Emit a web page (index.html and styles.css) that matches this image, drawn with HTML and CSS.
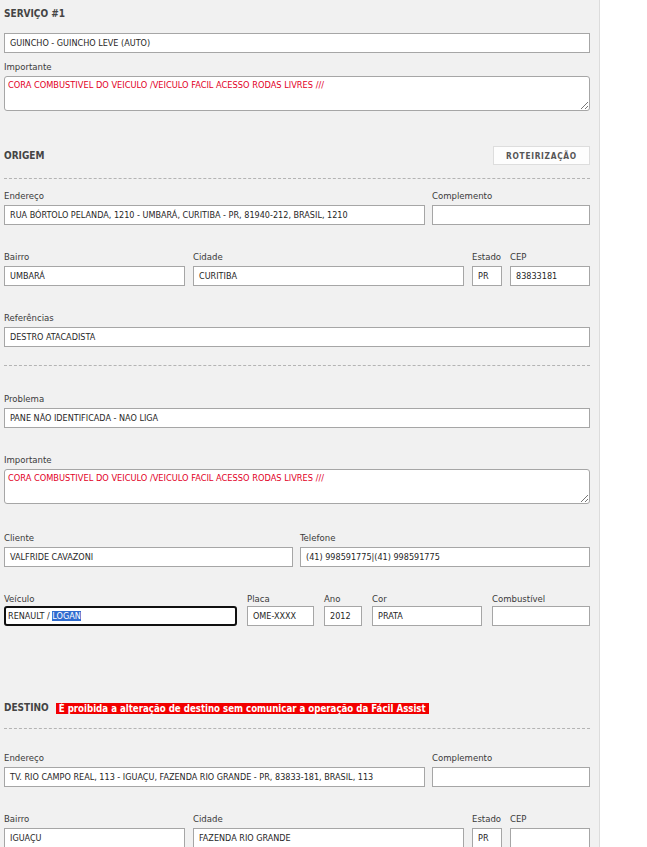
FILE: index.html
```html
<!DOCTYPE html>
<html lang="pt-BR">
<head>
<meta charset="utf-8">
<title>Serviço #1</title>
<link rel="stylesheet" href="styles.css">
</head>
<body>
<div class="panel">
  <div class="heading h-servico">SERVIÇO #1</div>
  <div class="field f-first">GUINCHO - GUINCHO LEVE (AUTO)</div>
  <div class="group g-imp1">
    <div class="label">Importante</div>
    <div class="area">CORA COMBUSTIVEL DO VEICULO /VEICULO FACIL ACESSO RODAS LIVRES ///<svg class="grip" width="8" height="8" viewBox="0 0 8 8"><path d="M1 8 L8 1 M5 8 L8 5" stroke="#777" stroke-width="1"/></svg></div>
  </div>

  <div class="section-head sh-origem">
    <span class="heading">ORIGEM</span>
    <span class="btn">ROTEIRIZAÇÃO</span>
  </div>
  <div class="dash d-origem"></div>

  <div class="row cols-end r-first">
    <div class="group"><div class="label">Endereço</div><div class="field">RUA BÓRTOLO PELANDA, 1210 - UMBARÁ, CURITIBA - PR, 81940-212, BRASIL, 1210</div></div>
    <div class="group"><div class="label">Complemento</div><div class="field"></div></div>
  </div>
  <div class="row cols-bairro r-next">
    <div class="group"><div class="label">Bairro</div><div class="field">UMBARÁ</div></div>
    <div class="group"><div class="label">Cidade</div><div class="field">CURITIBA</div></div>
    <div class="group"><div class="label">Estado</div><div class="field">PR</div></div>
    <div class="group"><div class="label">CEP</div><div class="field">83833181</div></div>
  </div>
  <div class="row r-next">
    <div class="group"><div class="label">Referências</div><div class="field">DESTRO ATACADISTA</div></div>
  </div>
  <div class="dash d-ref"></div>

  <div class="row r-problema">
    <div class="group"><div class="label">Problema</div><div class="field">PANE NÃO IDENTIFICADA - NAO LIGA</div></div>
  </div>
  <div class="row r-next">
    <div class="group"><div class="label">Importante</div><div class="area">CORA COMBUSTIVEL DO VEICULO /VEICULO FACIL ACESSO RODAS LIVRES ///<svg class="grip" width="8" height="8" viewBox="0 0 8 8"><path d="M1 8 L8 1 M5 8 L8 5" stroke="#777" stroke-width="1"/></svg></div></div>
  </div>
  <div class="row cols-cliente r-cliente">
    <div class="group"><div class="label">Cliente</div><div class="field">VALFRIDE CAVAZONI</div></div>
    <div class="group"><div class="label">Telefone</div><div class="field">(41) 998591775|(41) 998591775</div></div>
  </div>
  <div class="row cols-veiculo r-next tight">
    <div class="group"><div class="label">Veículo</div><div class="field focused">RENAULT / <span class="sel">LOGAN</span></div></div>
    <div class="group"><div class="label">Placa</div><div class="field">OME-XXXX</div></div>
    <div class="group"><div class="label">Ano</div><div class="field">2012</div></div>
    <div class="group"><div class="label">Cor</div><div class="field">PRATA</div></div>
    <div class="group"><div class="label">Combustível</div><div class="field"></div></div>
  </div>

  <div class="section-head sh-destino">
    <span class="heading">DESTINO</span>
    <span class="badge">É proibida a alteração de destino sem comunicar a operação da Fácil Assist</span>
  </div>
  <div class="dash d-destino"></div>

  <div class="row cols-end r-dest-first">
    <div class="group"><div class="label">Endereço</div><div class="field">TV. RIO CAMPO REAL, 113 - IGUAÇU, FAZENDA RIO GRANDE - PR, 83833-181, BRASIL, 113</div></div>
    <div class="group"><div class="label">Complemento</div><div class="field"></div></div>
  </div>
  <div class="row cols-bairro r-dest-bairro">
    <div class="group"><div class="label">Bairro</div><div class="field">IGUAÇU</div></div>
    <div class="group"><div class="label">Cidade</div><div class="field">FAZENDA RIO GRANDE</div></div>
    <div class="group"><div class="label">Estado</div><div class="field">PR</div></div>
    <div class="group"><div class="label">CEP</div><div class="field"></div></div>
  </div>
</div>
</body>
</html>
```

FILE: styles.css
```css
html, body {
  margin: 0;
  padding: 0;
  background: #ffffff;
}
body {
  font-family: "DejaVu Sans Condensed", "DejaVu Sans", sans-serif;
  font-stretch: condensed;
  color: #333;
  overflow: hidden;
}
.panel {
  width: 586px;
  min-height: 847px;
  padding: 0 9px 0 4px;
  background: #f1f1f1;
  border-right: 1px solid #dcdcdc;
  box-sizing: content-box;
}
.heading {
  font-weight: bold;
  font-size: 10px;
  line-height: 14px;
  color: #444;
}
.h-servico {
  padding-top: 7px;
}
.label {
  font-size: 9.5px;
  line-height: 12px;
  height: 12px;
  color: #3a3a3a;
  margin-bottom: 3px;
  white-space: nowrap;
}
.field {
  box-sizing: border-box;
  height: 20px;
  border: 1px solid #a6a6a6;
  background: #fff;
  font-size: 9px;
  line-height: 18px;
  padding: 0 5px;
  color: #262626;
  white-space: nowrap;
  overflow: hidden;
}
.f-first {
  margin-top: 12px;
}
.g-imp1 {
  margin-top: 8px;
}
.area {
  position: relative;
  box-sizing: border-box;
  height: 35px;
  border: 1px solid #a6a6a6;
  border-radius: 3px;
  background: #fff;
  font-size: 9.2px;
  line-height: 12px;
  padding: 2px 3px;
  color: #e2001f;
  white-space: nowrap;
}
.grip {
  position: absolute;
  right: 1px;
  bottom: 1px;
}
.section-head {
  display: flex;
  align-items: center;
}
.sh-origem {
  margin-top: 35px;
  height: 19px;
  justify-content: space-between;
}
.btn {
  box-sizing: border-box;
  height: 19px;
  width: 97px;
  border: 1px solid #dddddd;
  background: #fdfdfd;
  font-weight: bold;
  font-size: 8.3px;
  letter-spacing: 0.7px;
  color: #555;
  display: flex;
  align-items: center;
  justify-content: center;
}
.dash {
  height: 0;
  border-top: 1px dashed #b4b4b4;
}
.d-origem { margin-top: 13px; }
.d-ref { margin-top: 18px; }
.d-destino { margin-top: 13px; }
.row {
  display: grid;
  grid-template-columns: 1fr;
}
.r-first { margin-top: 11px; }
.r-next { margin-top: 26px; }
.r-problema { margin-top: 27px; }
.r-cliente { margin-top: 28px; }
.r-dest-first { margin-top: 23px; }
.r-dest-bairro { margin-top: 26px; }
.cols-end {
  grid-template-columns: 421px 1fr;
  column-gap: 7px;
}
.cols-bairro {
  grid-template-columns: 181px 271px 30px 1fr;
  column-gap: 8px;
}
.cols-cliente {
  grid-template-columns: 289px 1fr;
  column-gap: 7px;
}
.cols-veiculo {
  grid-template-columns: 233px 67px 38px 110px 1fr;
  column-gap: 10px;
}
.tight .label {
  margin-bottom: 1px;
}
.focused {
  border: 2px solid #101010;
  border-radius: 3px;
  line-height: 16px;
  padding: 0 2px;
}
.sel {
  background: #2f6ccf;
  color: #fff;
}
.sh-destino {
  margin-top: 75px;
  height: 14px;
}
.badge {
  margin-left: 7px;
  background: #f20000;
  color: #fff;
  font-weight: bold;
  font-size: 9.6px;
  line-height: 11px;
  padding: 0 3px;
  white-space: nowrap;
}
```
